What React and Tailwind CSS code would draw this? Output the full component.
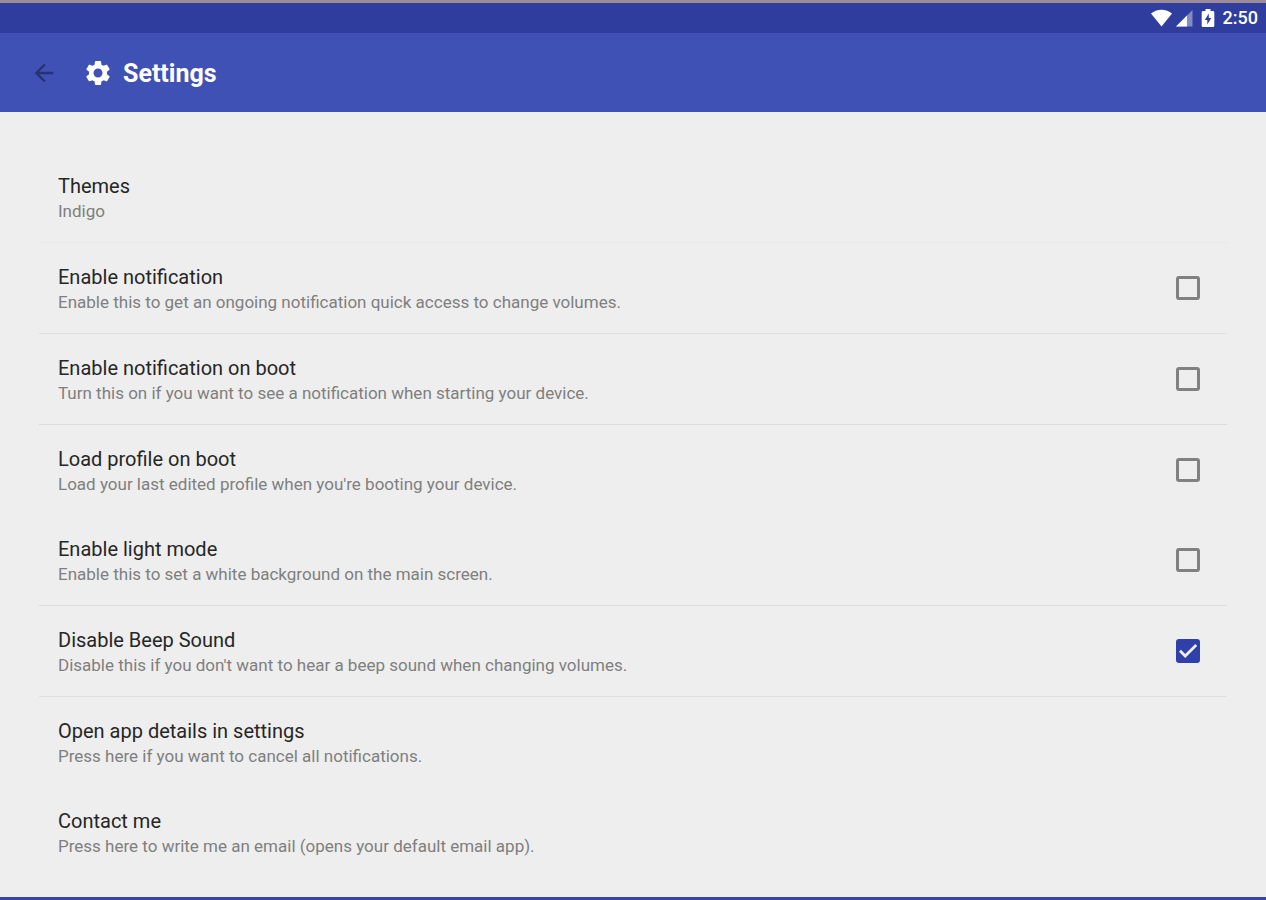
import { useState } from "react";
import { MdArrowBack, MdSettings } from "react-icons/md";

const items = [
  { id: "themes", title: "Themes", summary: "Indigo", divider: "border-[#e9e9e9]" },
  {
    id: "notification",
    title: "Enable notification",
    summary: "Enable this to get an ongoing notification quick access to change volumes.",
    checkbox: true,
    divider: "border-[#e0e0e0]",
  },
  {
    id: "notificationOnBoot",
    title: "Enable notification on boot",
    summary: "Turn this on if you want to see a notification when starting your device.",
    checkbox: true,
    divider: "border-[#dbdbdb]",
  },
  {
    id: "profileOnBoot",
    title: "Load profile on boot",
    summary: "Load your last edited profile when you're booting your device.",
    checkbox: true,
  },
  {
    id: "lightMode",
    title: "Enable light mode",
    summary: "Enable this to set a white background on the main screen.",
    checkbox: true,
    divider: "border-[#dbdbdb]",
  },
  {
    id: "disableBeep",
    title: "Disable Beep Sound",
    summary: "Disable this if you don't want to hear a beep sound when changing volumes.",
    checkbox: true,
    divider: "border-[#e0e0e0]",
  },
  {
    id: "appDetails",
    title: "Open app details in settings",
    summary: "Press here if you want to cancel all notifications.",
  },
  {
    id: "contact",
    title: "Contact me",
    summary: "Press here to write me an email (opens your default email app).",
  },
];

function StatusBar() {
  return (
    <div className="flex h-[33px] items-center justify-end border-t-[3px] border-[#9c8c97] bg-[#2f3e9e] pr-2 text-white">
      <svg className="mr-1 h-[18px] w-[21px]" viewBox="0 0 21 18" fill="currentColor" aria-hidden="true">
        <path d="M10.5 17.5 0 4.6C2.8 2.1 6.500.7 10.500.7s7.700 1.400 10.500 3.900z" />
      </svg>
      <svg className="mr-2 h-[18px] w-[17px]" viewBox="0 0 17 18" fill="currentColor" aria-hidden="true">
        <path d="M0 17.5 16.5 1v16.5z" opacity="0.4" />
        <path d="M0 17.5 11 6.500v11z" />
      </svg>
      <svg className="mr-2 h-[18px] w-[14px]" viewBox="0 0 14 18" aria-hidden="true">
        <path
          fill="currentColor"
          d="M4.5 0h5v2H12a1.300 1.300 0 0 1 1.300 1.300v13.400A1.300 1.300 0 0 1 12 18H2A1.300 1.300 0 0 1 .7 16.700V3.300A1.300 1.300 0 0 1 2 2h2.500z"
        />
        <path fill="#2f3e9e" d="M7.8 4.5 3.800 11h2.500v4.500l4-6.500H7.800z" />
      </svg>
      <span className="text-[18px] leading-6 font-medium">2:50</span>
    </div>
  );
}

function Checkbox({ id, checked, onChange }) {
  return (
    <span className="grid shrink-0">
      <input
        id={id}
        type="checkbox"
        checked={checked}
        onChange={onChange}
        className="col-start-1 row-start-1 size-6 cursor-pointer appearance-none rounded-[3px] border-[3px] border-[#818181] checked:border-[#3040ab] checked:bg-[#3040ab]"
      />
      {checked && (
        <svg
          className="pointer-events-none col-start-1 row-start-1 size-6"
          viewBox="0 0 24 24"
          fill="none"
          stroke="#eeeeee"
          strokeWidth="2.8"
          aria-hidden="true"
        >
          <path d="M4 11.800l5.200 5.200L20.200 6" />
        </svg>
      )}
    </span>
  );
}

function ItemText({ title, summary }) {
  return (
    <span className="flex min-w-0 flex-1 flex-col pt-0.5">
      <span className="text-[20px] leading-[26px] text-[#262626]">{title}</span>
      <span className="text-[17px] leading-6 text-[#7f7f7f]">{summary}</span>
    </span>
  );
}

export default function App() {
  const [values, setValues] = useState({ disableBeep: true });

  function toggle(id) {
    setValues({ ...values, [id]: !values[id] });
  }

  return (
    <div className="flex min-h-screen flex-col border-b-[3px] border-[#3545a8] bg-[#eeeeee] font-['Roboto',sans-serif]">
      <StatusBar />
      <header className="flex h-[79px] items-center bg-[#3f51b5] pl-[30px]">
        <button type="button" aria-label="Back" className="text-[#27326f]">
          <MdArrowBack size={28} />
        </button>
        <MdSettings size={30} className="ml-[25px] text-white" />
        <h1 className="ml-2.5 pt-0.5 text-[25px] leading-8 font-bold text-white">Settings</h1>
      </header>

      <ul className="px-[39px] pt-10">
        {items.map((item) => (
          <li key={item.id} className={item.divider ? `border-b ${item.divider}` : ""}>
            {item.checkbox ? (
              <label htmlFor={item.id} className="flex h-[90px] cursor-pointer items-center pr-[27px] pl-[19px]">
                <ItemText title={item.title} summary={item.summary} />
                <Checkbox id={item.id} checked={!!values[item.id]} onChange={() => toggle(item.id)} />
              </label>
            ) : (
              <button type="button" className="flex h-[90px] w-full cursor-pointer items-center pr-[27px] pl-[19px] text-left">
                <ItemText title={item.title} summary={item.summary} />
              </button>
            )}
          </li>
        ))}
      </ul>
    </div>
  );
}
